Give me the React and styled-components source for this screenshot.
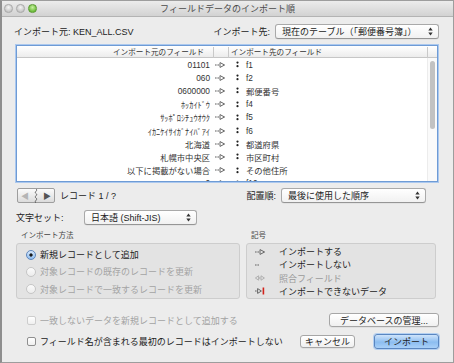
import React from "react";
import styled, { createGlobalStyle } from "styled-components";

const GlobalStyle = createGlobalStyle`
  html, body { margin: 0; padding: 0; background: #ececec; }
  body {
    font-family: "Liberation Sans", "Noto Sans CJK JP", sans-serif;
    color: #222;
  }
  * { box-sizing: border-box; }
`;

const rows = [
  ["01101", "f1"],
  ["060", "f2"],
  ["0600000", "郵便番号"],
  ["ﾎｯｶｲﾄﾞｳ", "f4"],
  ["ｻｯﾎﾟﾛｼﾁｭｳｵｳｸ", "f5"],
  ["ｲｶﾆｹｲｻｲｶﾞﾅｲﾊﾞｱｲ", "f6"],
  ["北海道", "都道府県"],
  ["札幌市中央区", "市区町村"],
  ["以下に掲載がない場合", "その他住所"],
  ["0", "f10"],
];

const Arrow = () => (
  <svg width="10" height="6" viewBox="0 0 10 6">
    <rect x="0" y="2.4" width="1.6" height="1.2" fill="#777" />
    <rect x="2.4" y="2.4" width="1.6" height="1.2" fill="#777" />
    <path d="M5 0.6 L9.6 3 L5 5.4 Z" fill="none" stroke="#666" strokeWidth="1" />
  </svg>
);

const NoArrow = () => (
  <svg width="10" height="6" viewBox="0 0 10 6">
    <rect x="0" y="2.4" width="1.6" height="1.2" fill="#777" />
    <rect x="2.4" y="2.4" width="1.6" height="1.2" fill="#777" />
  </svg>
);

const MatchArrow = () => (
  <svg width="10" height="6" viewBox="0 0 10 6">
    <path d="M3.6 0.8 L0.4 3 L3.6 5.2 Z" fill="none" stroke="#aaa" strokeWidth="0.9" />
    <rect x="4" y="2.4" width="1.4" height="1.2" fill="#aaa" />
    <path d="M6 0.8 L9.4 3 L6 5.2 Z" fill="none" stroke="#aaa" strokeWidth="0.9" />
  </svg>
);

const BadArrow = () => (
  <svg width="10" height="8" viewBox="0 0 10 8">
    <rect x="0" y="3.4" width="1.6" height="1.2" fill="#777" />
    <path d="M2.6 1.6 L6.4 4 L2.6 6.4 Z" fill="none" stroke="#666" strokeWidth="1" />
    <rect x="7.6" y="0.5" width="1.6" height="7" fill="#d2231c" />
  </svg>
);

const Grip = () => (
  <svg width="3" height="7" viewBox="0 0 3 7">
    <circle cx="1.5" cy="1.6" r="1.1" fill="#222" />
    <circle cx="1.5" cy="5.2" r="1.1" fill="#222" />
  </svg>
);

const Stepper = () => (
  <svg width="5" height="9" viewBox="0 0 5 9">
    <path d="M0.3 3.4 L2.5 0.5 L4.7 3.4 Z" fill="#333" />
    <path d="M0.3 5.6 L2.5 8.5 L4.7 5.6 Z" fill="#333" />
  </svg>
);

const Squiggle = () => (
  <svg width="6" height="14" viewBox="0 0 6 14">
    <path
      d="M3 0 C5.5 1.5 0.5 3 3 4.5 C5.5 6 0.5 7.5 3 9 C5.5 10.5 0.5 12 3 14"
      fill="none"
      stroke="#555"
      strokeWidth="0.9"
    />
  </svg>
);

export default function App() {
  return (
    <>
      <GlobalStyle />
      <Window>
        <TitleBar>
          <Lights>
            <Light />
            <Light />
            <Light $green />
          </Lights>
          <Title>フィールドデータのインポート順</Title>
          <span />
        </TitleBar>

        <Body>
          <Row $top={6} $h={16}>
            <Label>インポート元: KEN_ALL.CSV</Label>
            <Spacer />
            <Label>インポート先:</Label>
            <Popup $w={164} $ml={5}>
              現在のテーブル（「郵便番号簿」）
              <Stepper />
            </Popup>
          </Row>

          <ListBox>
            <Header>
              <HeadCell $right>インポート元のフィールド</HeadCell>
              <HeadCell />
              <HeadCell>インポート先のフィールド</HeadCell>
              <HeadCell $last />
            </Header>
            <ListBody>
              <Rows>
                {rows.map(([src, dst]) => (
                  <FieldRow key={src}>
                    <Src>{src}</Src>
                    <ArrowCell>
                      <Arrow />
                    </ArrowCell>
                    <Dst>
                      <Grip />
                      <span>{dst}</span>
                    </Dst>
                  </FieldRow>
                ))}
              </Rows>
              <ScrollTrack>
                <Thumb />
              </ScrollTrack>
            </ListBody>
          </ListBox>

          <Row $top={6} $h={15}>
            <NavSegment>
              <NavHalf $dim>◀</NavHalf>
              <Squiggle />
              <NavHalf>▶</NavHalf>
            </NavSegment>
            <Label $ml={5}>レコード 1 / ?</Label>
            <Spacer />
            <Label>配置順:</Label>
            <Popup $w={145} $ml={5} $mr={13}>
              最後に使用した順序
              <Stepper />
            </Popup>
          </Row>

          <Row $top={7} $h={14}>
            <Label $w={68} $ml={2}>文字セット:</Label>
            <Popup $w={113}>
              日本語 (Shift-JIS)
              <Stepper />
            </Popup>
          </Row>

          <Groups>
            <Group $w={224}>
              <GroupLabel>インポート方法</GroupLabel>
              <GroupBox>
                <Option>
                  <Radio $on />
                  新規レコードとして追加
                </Option>
                <Option $dim>
                  <Radio />
                  対象レコードの既存のレコードを更新
                </Option>
                <Option $dim>
                  <Radio />
                  対象レコードで一致するレコードを更新
                </Option>
              </GroupBox>
            </Group>
            <Group $w={190}>
              <GroupLabel>記号</GroupLabel>
              <GroupBox $legend>
                <LegendItem>
                  <LegendIcon><Arrow /></LegendIcon>
                  インポートする
                </LegendItem>
                <LegendItem>
                  <LegendIcon><NoArrow /></LegendIcon>
                  インポートしない
                </LegendItem>
                <LegendItem $dim>
                  <LegendIcon><MatchArrow /></LegendIcon>
                  照合フィールド
                </LegendItem>
                <LegendItem>
                  <LegendIcon><BadArrow /></LegendIcon>
                  インポートできないデータ
                </LegendItem>
              </GroupBox>
            </Group>
          </Groups>

          <Row $top={14} $h={14}>
            <Check $dim>
              <Box $dim />
              一致しないデータを新規レコードとして追加する
            </Check>
            <Spacer />
            <Button $w={110}>データベースの管理...</Button>
          </Row>

          <Row $top={7} $h={15}>
            <Check>
              <Box />
              フィールド名が含まれる最初のレコードはインポートしない
            </Check>
            <Spacer />
            <Button $w={55} $h={13}>キャンセル</Button>
            <Button $w={65} $h={15} $ml={19} $primary>インポート</Button>
          </Row>
        </Body>
      </Window>
    </>
  );
}

const Window = styled.div`
  width: 454px;
  height: 363px;
  background: #ececec;
  border: 1px solid #9d9d9d;
  border-left: 2px solid #8e8e8e;
  display: flex;
  flex-direction: column;
  overflow: hidden;
`;

const TitleBar = styled.div`
  height: 16px;
  flex: none;
  display: grid;
  grid-template-columns: 1fr auto 1fr;
  align-items: center;
  background: linear-gradient(#ececec, #d2d2d2);
  border-bottom: 1px solid #b3b3b3;
`;

const Lights = styled.div`
  display: flex;
  gap: 3.5px;
  padding-left: 2px;
`;

const Light = styled.span`
  width: 8.5px;
  height: 8.5px;
  border-radius: 50%;
  border: 1px solid ${(p) => (p.$green ? "#5a9a32" : "#a9a9a9")};
  background: ${(p) =>
    p.$green
      ? "radial-gradient(circle at 50% 35%, #c7f0a0, #6ebd3c 70%)"
      : "radial-gradient(circle at 50% 35%, #f4f4f4, #c4c4c4 75%)"};
`;

const Title = styled.div`
  font-size: 9px;
  color: #4b4b4b;
  font-family: "Noto Sans CJK JP", sans-serif;
`;

const Body = styled.div`
  flex: 1;
  display: flex;
  flex-direction: column;
  padding: 0 14px 0 12px;
`;

const Row = styled.div`
  display: flex;
  align-items: center;
  margin-top: ${(p) => p.$top}px;
  height: ${(p) => p.$h}px;
  flex: none;
`;

const Spacer = styled.div`
  flex: 1;
`;

const Label = styled.span`
  font-size: 9px;
  white-space: nowrap;
  margin-left: ${(p) => p.$ml || 0}px;
  width: ${(p) => (p.$w ? `${p.$w}px` : "auto")};
`;

const Popup = styled.div`
  width: ${(p) => p.$w}px;
  height: 15px;
  margin-left: ${(p) => p.$ml || 0}px;
  margin-right: ${(p) => p.$mr || 0}px;
  display: flex;
  align-items: center;
  justify-content: space-between;
  padding: 0 5px 0 6px;
  font-size: 9px;
  white-space: nowrap;
  border: 1px solid #a9a9a9;
  border-bottom-color: #959595;
  border-radius: 3px;
  background: linear-gradient(#ffffff, #f1f1f1);
  box-shadow: 0 0.5px 0.5px rgba(0, 0, 0, 0.08);
`;

const ListBox = styled.div`
  margin: 6px 1px 0 2px;
  height: 137px;
  flex: none;
  display: flex;
  flex-direction: column;
  background: #fff;
  border: 1px solid #6e9bd5;
  box-shadow: 0 0 0 1px #abc8ee;
  overflow: hidden;
`;

const Header = styled.div`
  height: 12px;
  flex: none;
  display: grid;
  grid-template-columns: 197px 15px 1fr 9px;
  background: linear-gradient(#ffffff, #ececec);
  border-bottom: 1px solid #c6c6c6;
`;

const HeadCell = styled.div`
  font-size: 7.6px;
  color: #333;
  line-height: 11px;
  white-space: nowrap;
  text-align: ${(p) => (p.$right ? "right" : "left")};
  padding: 0 ${(p) => (p.$right ? 9 : 2)}px;
  border-right: ${(p) => (p.$last ? "none" : "1px solid #c9c9c9")};
  margin: 1px 0;
`;

const ListBody = styled.div`
  flex: 1;
  display: flex;
  min-height: 0;
`;

const Rows = styled.div`
  flex: 1;
  overflow: hidden;
`;

const FieldRow = styled.div`
  height: 13.2px;
  display: grid;
  grid-template-columns: 197px 15px 1fr;
  align-items: center;
  font-size: 8.3px;
  color: #333;
  white-space: nowrap;
`;

const Src = styled.div`
  text-align: right;
  padding-right: 4px;
  overflow: hidden;
`;

const ArrowCell = styled.div`
  display: flex;
  align-items: center;
  padding-left: 1px;
`;

const Dst = styled.div`
  display: flex;
  align-items: center;
  gap: 7px;
  padding-left: 7px;
`;

const ScrollTrack = styled.div`
  width: 10px;
  flex: none;
  border-left: 1px solid #ececec;
  background: #fafafa;
  padding: 3px 2px 0 2px;
`;

const Thumb = styled.div`
  height: 68px;
  border-radius: 3px;
  background: #c2c2c2;
`;

const NavSegment = styled.div`
  margin-left: 3px;
  width: 38px;
  height: 15px;
  display: flex;
  align-items: center;
  justify-content: space-between;
  padding: 0 3px;
  border: 1px solid #9e9e9e;
  border-radius: 2px;
  background: linear-gradient(#fbfbfb, #dcdcdc);
`;

const NavHalf = styled.span`
  font-size: 8px;
  color: ${(p) => (p.$dim ? "#b5b5b5" : "#555")};
`;

const Groups = styled.div`
  display: flex;
  gap: 6px;
  margin: 7px 3px 0 2px;
  flex: none;
`;

const Group = styled.div`
  width: ${(p) => p.$w}px;
  display: flex;
  flex-direction: column;
`;

const GroupLabel = styled.div`
  font-size: 7.5px;
  color: #444;
  height: 12px;
  line-height: 10px;
  padding-left: 5px;
`;

const GroupBox = styled.div`
  height: 56px;
  border: 1px solid #cdcdcd;
  border-radius: 3px;
  background: #e3e3e3;
  display: flex;
  flex-direction: column;
  padding: ${(p) => (p.$legend ? "1px 0 0 8px" : "2px 0 0 9px")};
`;

const Option = styled.div`
  height: 17.5px;
  display: flex;
  align-items: center;
  gap: 4px;
  font-size: 9px;
  color: ${(p) => (p.$dim ? "#a3a3a3" : "#222")};
`;

const Radio = styled.span`
  width: 10px;
  height: 10px;
  border-radius: 50%;
  flex: none;
  border: 1px solid ${(p) => (p.$on ? "#5d86bd" : "#c6c6c6")};
  background: ${(p) =>
    p.$on
      ? "radial-gradient(circle, #1b1b1b 0 1.4px, transparent 1.8px), linear-gradient(#d7e8fb, #8fbdf0)"
      : "linear-gradient(#fbfbfb, #ececec)"};
`;

const LegendItem = styled.div`
  height: 13.6px;
  display: flex;
  align-items: center;
  font-size: 9px;
  color: ${(p) => (p.$dim ? "#9a9a9a" : "#222")};
`;

const LegendIcon = styled.span`
  width: 24px;
  display: flex;
  align-items: center;
`;

const Check = styled.div`
  display: flex;
  align-items: center;
  gap: 4px;
  padding-left: 13px;
  font-size: 9px;
  white-space: nowrap;
  color: ${(p) => (p.$dim ? "#a3a3a3" : "#222")};
`;

const Box = styled.span`
  width: 9px;
  height: 9px;
  flex: none;
  border-radius: 2px;
  border: 1px solid ${(p) => (p.$dim ? "#cdcdcd" : "#8f8f8f")};
  background: linear-gradient(#ffffff, #efefef);
`;

const Button = styled.div`
  width: ${(p) => p.$w}px;
  height: ${(p) => p.$h || 14}px;
  margin-left: ${(p) => p.$ml || 0}px;
  display: flex;
  align-items: center;
  justify-content: center;
  font-size: 9px;
  white-space: nowrap;
  border-radius: 3px;
  border: 1px solid ${(p) => (p.$primary ? "#5a86c0" : "#a6a6a6")};
  background: ${(p) =>
    p.$primary
      ? "linear-gradient(#cfe4fb, #8cbdf0 55%, #a9d0f8)"
      : "linear-gradient(#ffffff, #f0f0f0)"};
  box-shadow: ${(p) =>
    p.$primary ? "0 0 0 1px #b4d0f1" : "0 0.5px 0.5px rgba(0,0,0,0.1)"};
`;
